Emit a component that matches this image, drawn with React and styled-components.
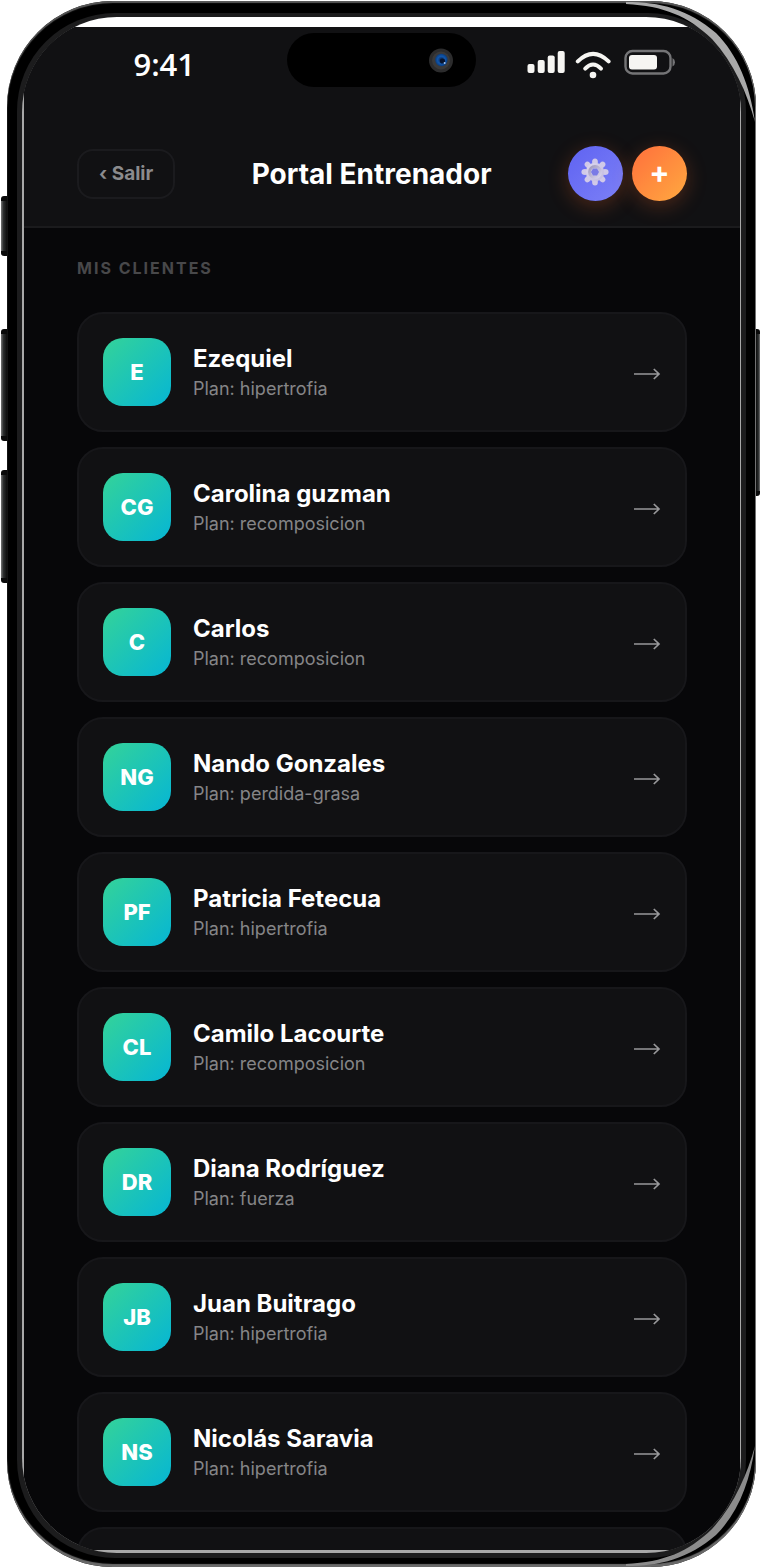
import React from "react";
import styled, { createGlobalStyle } from "styled-components";

const clients = [
  { initials: "E", name: "Ezequiel", plan: "hipertrofia" },
  { initials: "CG", name: "Carolina guzman", plan: "recomposicion" },
  { initials: "C", name: "Carlos", plan: "recomposicion" },
  { initials: "NG", name: "Nando Gonzales", plan: "perdida-grasa" },
  { initials: "PF", name: "Patricia Fetecua", plan: "hipertrofia" },
  { initials: "CL", name: "Camilo Lacourte", plan: "recomposicion" },
  { initials: "DR", name: "Diana Rodríguez", plan: "fuerza" },
  { initials: "JB", name: "Juan Buitrago", plan: "hipertrofia" },
  { initials: "NS", name: "Nicolás Saravia", plan: "hipertrofia" },
];

const petals = [0, 45, 90, 135, 180, 225, 270, 315];

const GearIcon = () => (
  <svg width="28" height="28" viewBox="0 0 28 28" aria-hidden="true">
    <defs>
      <linearGradient id="gear" x1="0" y1="0" x2="1" y2="1">
        <stop offset="0" stopColor="#dcd6ee" />
        <stop offset="1" stopColor="#c3bce0" />
      </linearGradient>
      <linearGradient id="ring" x1="0" y1="0" x2="1" y2="1">
        <stop offset="0" stopColor="#a09abd" />
        <stop offset="1" stopColor="#d9d4ee" />
      </linearGradient>
    </defs>
    <g fill="#d0c9e8">
      {petals.map((a) => (
        <ellipse
          key={a}
          cx="14"
          cy="4"
          rx="2.9"
          ry="3.6"
          transform={`rotate(${a} 14 14)`}
        />
      ))}
    </g>
    <circle cx="14" cy="14" r="9.2" fill="url(#gear)" />
    <circle cx="14" cy="14" r="5.4" fill="none" stroke="url(#ring)" strokeWidth="3" />
    <path d="M12 10.6 L16 10.6 L18 14 L16 17.4 L12 17.4 L10 14 Z" fill="#7a7ae6" />
  </svg>
);

const ArrowIcon = () => (
  <svg width="28" height="16" viewBox="0 0 28 16" fill="none" aria-hidden="true">
    <path
      d="M1 10 H26 M20.8 5 L26 10 L20.8 15"
      stroke="#98989a"
      strokeWidth="1.7"
    />
  </svg>
);

const StatusIcons = () => (
  <svg width="148" height="30" viewBox="0 0 148 30" aria-hidden="true">
    <g fill="#f6f5f2">
      <rect x="0.5" y="15" width="7" height="9" rx="2" />
      <rect x="10.7" y="11" width="7" height="13" rx="2" />
      <rect x="20.7" y="6.5" width="7" height="17.5" rx="2" />
      <rect x="30.7" y="2" width="7" height="22" rx="2" />
      <circle cx="66" cy="26" r="3.3" />
    </g>
    <g fill="none" stroke="#f6f5f2" strokeLinecap="round" strokeWidth="4">
      <path d="M50.8 12.4 Q66 -2.6 81.6 12.4" />
      <path d="M58.2 19.6 Q66 11.4 74 19.6" />
    </g>
    <rect x="98.5" y="2" width="45" height="22.5" rx="7" fill="none" stroke="#747476" strokeWidth="2.4" />
    <rect x="102" y="6" width="28" height="14.5" rx="3" fill="#f6f5f2" />
    <path d="M145.5 9 Q148 10.5 148 13.2 Q148 16 145.5 17.5 Z" fill="#747476" />
  </svg>
);

const CameraIcon = () => (
  <svg width="26" height="26" viewBox="0 0 26 26" aria-hidden="true">
    <defs>
      <radialGradient id="iris" cx="0.5" cy="0.5" r="0.5">
        <stop offset="0" stopColor="#0a1a3a" />
        <stop offset="0.6" stopColor="#0f56ad" />
        <stop offset="1" stopColor="#0b3c7c" />
      </radialGradient>
    </defs>
    <circle cx="13" cy="13.5" r="12" fill="#2c2c2d" />
    <circle cx="13" cy="13.5" r="9" fill="#3a3a3b" />
    <circle cx="13.4" cy="13" r="6.2" fill="url(#iris)" />
    <circle cx="14.5" cy="14" r="2.6" fill="#08142e" />
    <circle cx="16.6" cy="16" r="1" fill="#a9c9f5" />
  </svg>
);

const App = () => {
  return (
    <Page>
      <GlobalStyle />
      <Phone>
        <SideButton $side="left" $top={195} $size={60} />
        <SideButton $side="left" $top={328} $size={112} />
        <SideButton $side="left" $top={469} $size={113} />
        <SideButton $side="right" $top={328} $size={167} />
        <Bezel>
          <Screen>
            <Content>
              <StatusBar>
                <Time>9:41</Time>
                <Island>
                  <CameraIcon />
                </Island>
                <Signals>
                  <StatusIcons />
                </Signals>
              </StatusBar>
              <Header>
                <BackButton type="button">‹ Salir</BackButton>
                <Title>Portal Entrenador</Title>
                <Actions>
                  <RoundButton type="button" aria-label="Ajustes" $from="#5f63f2" $to="#7c80f6">
                    <GearIcon />
                  </RoundButton>
                  <RoundButton type="button" $from="#ff6f3c" $to="#ffa940">
                    +
                  </RoundButton>
                </Actions>
              </Header>
              <Main>
                <SectionTitle>Mis clientes</SectionTitle>
                <List>
                  {clients.map((client) => (
                    <li key={client.name}>
                      <Card type="button">
                        <Avatar>{client.initials}</Avatar>
                        <Info>
                          <Name>{client.name}</Name>
                          <Plan>Plan: {client.plan}</Plan>
                        </Info>
                        <ArrowIcon />
                      </Card>
                    </li>
                  ))}
                  <CardEdge aria-hidden="true" />
                </List>
              </Main>
            </Content>
          </Screen>
        </Bezel>
        <Shine $corner="top" viewBox="0 0 130 130" aria-hidden="true">
          <path
            d="M0 1 C34 1 62 8 90 32 C112 54 124 85 129 121 C121 92 108 62 86 38 C62 15 38 5 0 3 Z"
            fill="#a9a9a9"
          />
        </Shine>
        <Shine $corner="bottom" viewBox="0 0 130 130" aria-hidden="true">
          <path
            d="M0 1 C34 1 62 8 90 32 C112 54 124 85 129 121 C121 92 108 62 86 38 C62 15 38 5 0 3 Z"
            fill="#8c8c8c"
          />
        </Shine>
      </Phone>
    </Page>
  );
};

const GlobalStyle = createGlobalStyle`
  * {
    box-sizing: border-box;
  }
  body {
    margin: 0;
    background: #fff;
    font-family: Inter, "Liberation Sans", sans-serif;
  }
  button {
    font-family: inherit;
    cursor: pointer;
  }
`;

const Page = styled.div`
  height: 100vh;
  padding: 1px 4px 1px 7px;
`;

const Phone = styled.div`
  position: relative;
  height: 100%;
  padding: 12px 10px 9px;
  border-radius: 106px;
  background: #000;
  box-shadow: inset 0 2px 1px #5a5a5a, inset 0 -3px 1px #6a6a6a,
    inset -1px 0 0 #777;
`;

const SideButton = styled.span`
  position: absolute;
  top: ${({ $top }) => $top}px;
  ${({ $side }) => ($side === "left" ? "left: -6px;" : "right: -4px;")}
  width: ${({ $side }) => ($side === "left" ? 6 : 4)}px;
  height: ${({ $size }) => $size}px;
  border-radius: ${({ $side }) =>
    $side === "left" ? "3px 0 0 3px" : "0 3px 3px 0"};
  background: linear-gradient(
    ${({ $side }) => ($side === "left" ? "to right" : "to left")},
    #777,
    #2c2e2e 40%,
    #0c0c0c
  );
  border: solid #0a0a0a;
  border-width: 5px 0;
`;

const Bezel = styled.div`
  height: 100%;
  padding: 4px 5px 5px;
  border-radius: 98px;
  background: #1c1c1d;
`;

const Screen = styled.div`
  height: 100%;
  padding: 10px 1px 3px 2px;
  border-radius: 95px;
  overflow: hidden;
  background: linear-gradient(#fff 0 12px, #a8a8a8 12px);
`;

const Content = styled.div`
  height: 100%;
  display: flex;
  flex-direction: column;
  overflow: hidden;
  background: #070709;
`;

const StatusBar = styled.div`
  display: grid;
  grid-template-columns: 1fr auto 1fr;
  align-items: center;
  padding: 6px 2px 36px 0;
  background: #111113;
`;

const Time = styled.span`
  padding: 8px 0 0 18px;
  font-family: "Open Sans", "Noto Sans", sans-serif;
  font-size: 31px;
  line-height: 46px;
  font-weight: 600;
  text-align: center;
  color: #fff;
`;

const Island = styled.div`
  width: 189px;
  height: 54px;
  padding-right: 22px;
  display: flex;
  align-items: center;
  justify-content: flex-end;
  border-radius: 27px;
  background: #000;
`;

const Signals = styled.div`
  display: flex;
  justify-content: center;
  padding: 8px 12px 0 0;
`;

const Header = styled.header`
  display: flex;
  align-items: center;
  justify-content: space-between;
  padding: 23px 53px 25px;
  border-bottom: 2px solid #1b1b1d;
  background: #111113;
`;

const BackButton = styled.button`
  padding: 0 20px;
  border: 2px solid #1b1b1e;
  border-radius: 16px;
  background: #111113;
  color: #8b8b8d;
  font-size: 19px;
  line-height: 46px;
  font-weight: 700;
`;

const Title = styled.h1`
  margin: 0;
  font-size: 28px;
  line-height: 36px;
  font-weight: 700;
  color: #fff;
`;

const Actions = styled.div`
  display: flex;
  gap: 9px;
`;

const RoundButton = styled.button`
  width: 55px;
  height: 55px;
  padding: 0 0 4px;
  display: flex;
  align-items: center;
  justify-content: center;
  border: none;
  border-radius: 50%;
  background: linear-gradient(135deg, ${({ $from }) => $from}, ${({ $to }) => $to});
  box-shadow: 0 5px 20px rgba(255, 107, 43, 0.25);
  color: #fff;
  font-size: 30px;
  line-height: 36px;
  font-weight: 700;
`;

const Main = styled.main`
  flex: 1;
  min-height: 0;
  padding: 28px 53px 0;
  overflow: hidden;
`;

const SectionTitle = styled.h2`
  margin: 0 0 32px;
  font-size: 16px;
  line-height: 24px;
  font-weight: 700;
  letter-spacing: 2px;
  text-transform: uppercase;
  color: #48484a;
`;

const List = styled.ul`
  margin: 0;
  padding: 0;
  display: flex;
  flex-direction: column;
  gap: 15px;
  list-style: none;
`;

const Card = styled.button`
  width: 100%;
  padding: 24px;
  display: flex;
  align-items: center;
  gap: 22px;
  border: 2px solid #17171a;
  border-radius: 26px;
  background: #111113;
  text-align: left;
`;

const CardEdge = styled.li`
  height: 120px;
  flex-shrink: 0;
  border: 2px solid #17171a;
  border-radius: 26px;
  background: #111113;
`;

const Avatar = styled.span`
  width: 68px;
  height: 68px;
  display: flex;
  align-items: center;
  justify-content: center;
  border-radius: 20px;
  background: linear-gradient(135deg, #34d399, #06b6d4);
  color: #fff;
  font-size: 22px;
  font-weight: 800;
`;

const Info = styled.span`
  flex: 1;
  padding-top: 2px;
  display: flex;
  flex-direction: column;
`;

const Name = styled.span`
  font-size: 24px;
  line-height: 32px;
  font-weight: 700;
  color: #fff;
`;

const Plan = styled.span`
  font-size: 18px;
  line-height: 28px;
  color: #858587;
`;

const Shine = styled.svg`
  position: absolute;
  right: 0;
  ${({ $corner }) => ($corner === "top" ? "top: 0;" : "bottom: 0;")}
  width: 130px;
  height: 130px;
  pointer-events: none;
  ${({ $corner }) => $corner === "bottom" && "transform: scaleY(-1);"}
`;

export default App;
